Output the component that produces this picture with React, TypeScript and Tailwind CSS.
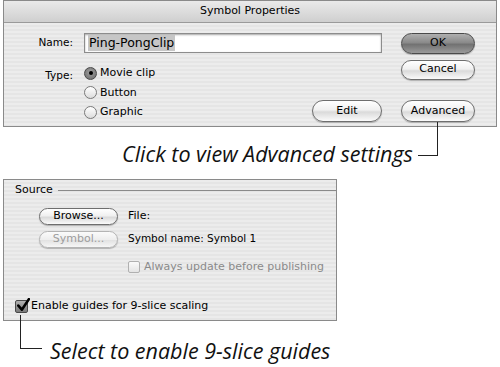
import React from "react";

const stripe =
  "bg-[image:repeating-linear-gradient(180deg,#ececec_0px,#ececec_2px,#e5e5e5_2px,#e5e5e5_4px)]";

function AquaButton({
  children,
  className = "",
  variant = "normal",
}: {
  children: React.ReactNode;
  className?: string;
  variant?: "normal" | "default" | "disabled";
}) {
  const v =
    variant === "default"
      ? "border-[#4a4a4a] bg-[linear-gradient(180deg,#b0b0b0_0%,#8a8a8a_45%,#727272_55%,#9a9a9a_100%)] text-black"
      : variant === "disabled"
      ? "border-[#b4b4b4] bg-[linear-gradient(180deg,#fbfbfb_0%,#eeeeee_50%,#e2e2e2_55%,#f6f6f6_100%)] text-[#9d9d9d]"
      : "border-[#6e6e6e] bg-[linear-gradient(180deg,#ffffff_0%,#f0f0f0_45%,#dadada_55%,#fafafa_100%)] text-black";
  return (
    <div
      className={`flex items-center justify-center rounded-full border shadow-[0_1px_1px_rgba(0,0,0,0.25)] ${v} ${className}`}
    >
      {children}
    </div>
  );
}

function Radio({ checked, label }: { checked?: boolean; label: string }) {
  return (
    <div className="flex h-[19.5px] items-center">
      <div
        className={`flex h-[13px] w-[13px] items-center justify-center rounded-full border ${
          checked
            ? "border-[#4a4a4a] bg-[radial-gradient(circle_at_50%_40%,#a0a0a0,#6a6a6a)]"
            : "border-[#7a7a7a] bg-[linear-gradient(180deg,#ffffff,#dcdcdc)]"
        }`}
      >
        {checked && <div className="h-[4px] w-[4px] rounded-full bg-black" />}
      </div>
      <span className="ml-[3px] text-[11px]">{label}</span>
    </div>
  );
}

export default function App() {
  return (
    <div className="relative h-[367px] w-[500px] overflow-hidden bg-white font-['DejaVu_Sans',sans-serif] text-[11px] text-black">
      {/* Top dialog */}
      <div className="ml-[3px] flex h-[127px] w-[494px] flex-col border border-[#8a8a8a]">
        <div className="flex h-[22px] items-center justify-center border-b border-[#9a9a9a] bg-[linear-gradient(180deg,#eaeaea,#cfcfcf)] text-[11px]">
          Symbol Properties
        </div>
        <div className={`flex flex-1 pt-[10px] pb-[4px] ${stripe}`}>
          {/* left column */}
          <div className="flex w-[378px] flex-col">
            <div className="flex h-[20px] items-center">
              <div className="w-[69px] text-right text-[10.5px]">Name:</div>
              <div className="ml-[11px] flex h-[20px] w-[298px] items-center border border-[#8c8c8c] bg-white pl-[3px] shadow-[inset_0_1px_2px_rgba(0,0,0,0.35)]">
                <span className="bg-[#c6c6c6] px-[1px] text-[12.5px] leading-[16px]">Ping-PongClip</span>
              </div>
            </div>
            <div className="mt-[11px] flex flex-1 items-end justify-between">
              <div className="flex self-start">
                <div className="w-[69px] pt-[4px] text-right text-[10.5px]">Type:</div>
                <div className="ml-[11px] flex flex-col">
                  <Radio checked label="Movie clip" />
                  <Radio label="Button" />
                  <Radio label="Graphic" />
                </div>
              </div>
              <AquaButton className="h-[22px] w-[70px]">Edit</AquaButton>
            </div>
          </div>
          {/* right column */}
          <div className="ml-[19px] flex w-[74px] flex-col">
            <AquaButton variant="default" className="h-[21px]">
              OK
            </AquaButton>
            <AquaButton className="mt-[6px] h-[20px]">Cancel</AquaButton>
            <div className="flex-1" />
            <AquaButton className="h-[22px]">Advanced</AquaButton>
          </div>
        </div>
      </div>

      {/* Callout 1 */}
      <div className="flex h-[52px] items-center pl-[122px] pt-[2px]">
        <span className="font-['Open_Sans',sans-serif] text-[21.5px] italic leading-none text-[#111]">
          Click to view Advanced settings
        </span>
      </div>

      {/* Bottom panel */}
      <div className={`ml-[3px] flex h-[142px] w-[334px] flex-col border border-[#8a8a8a] ${stripe}`}>
        <div className="flex items-center pl-[11px] pt-[2px]">
          <span>Source</span>
          <div className="ml-[5px] h-px flex-1 bg-[#8a8a8a]" />
        </div>
        <div className="mt-[9px] flex items-center">
          <AquaButton className="ml-[35px] h-[17px] w-[79px]">Browse...</AquaButton>
          <span className="ml-[10px]">File:</span>
        </div>
        <div className="mt-[6px] flex items-center">
          <AquaButton variant="disabled" className="ml-[35px] h-[17px] w-[79px]">
            Symbol...
          </AquaButton>
          <span className="ml-[10px] text-[10.5px]">Symbol name: Symbol 1</span>
        </div>
        <div className="mt-[11px] flex items-center pl-[124px] text-[#8a8a8a]">
          <div className="h-[12px] w-[12px] rounded-[2px] border border-[#b0b0b0] bg-[linear-gradient(180deg,#fafafa,#e4e4e4)]" />
          <span className="ml-[4px]">Always update before publishing</span>
        </div>
        <div className="mt-[23px] flex items-center pl-[11px]">
          <div className="relative flex h-[13px] w-[13px] items-center justify-center rounded-[2px] border border-[#4a4a4a] bg-[linear-gradient(180deg,#b0b0b0,#7a7a7a)]">
            <svg viewBox="0 0 12 12" className="absolute left-[0px] top-[-3px] h-[14px] w-[14px]">
              <path d="M2 6.5 L5 10 L11 1" fill="none" stroke="#000" strokeWidth="2.2" strokeLinecap="round" strokeLinejoin="round" />
            </svg>
          </div>
          <span className="ml-[3px]">Enable guides for 9-slice scaling</span>
        </div>
      </div>

      {/* Callout 2 */}
      <div className="flex h-[46px] items-center pl-[50px] pt-[14px]">
        <span className="font-['Open_Sans',sans-serif] text-[21.5px] italic leading-none text-[#111]">
          Select to enable 9-slice guides
        </span>
      </div>

      {/* Callout leader lines */}
      <div className="absolute left-[418px] top-[122px] h-[34px] w-[20px] border-b-[1.5px] border-r-[1.5px] border-[#222]" />
      <div className="absolute left-[20px] top-[315px] h-[34px] w-[22px] border-b-[1.5px] border-l-[1.5px] border-[#222]" />
    </div>
  );
}
